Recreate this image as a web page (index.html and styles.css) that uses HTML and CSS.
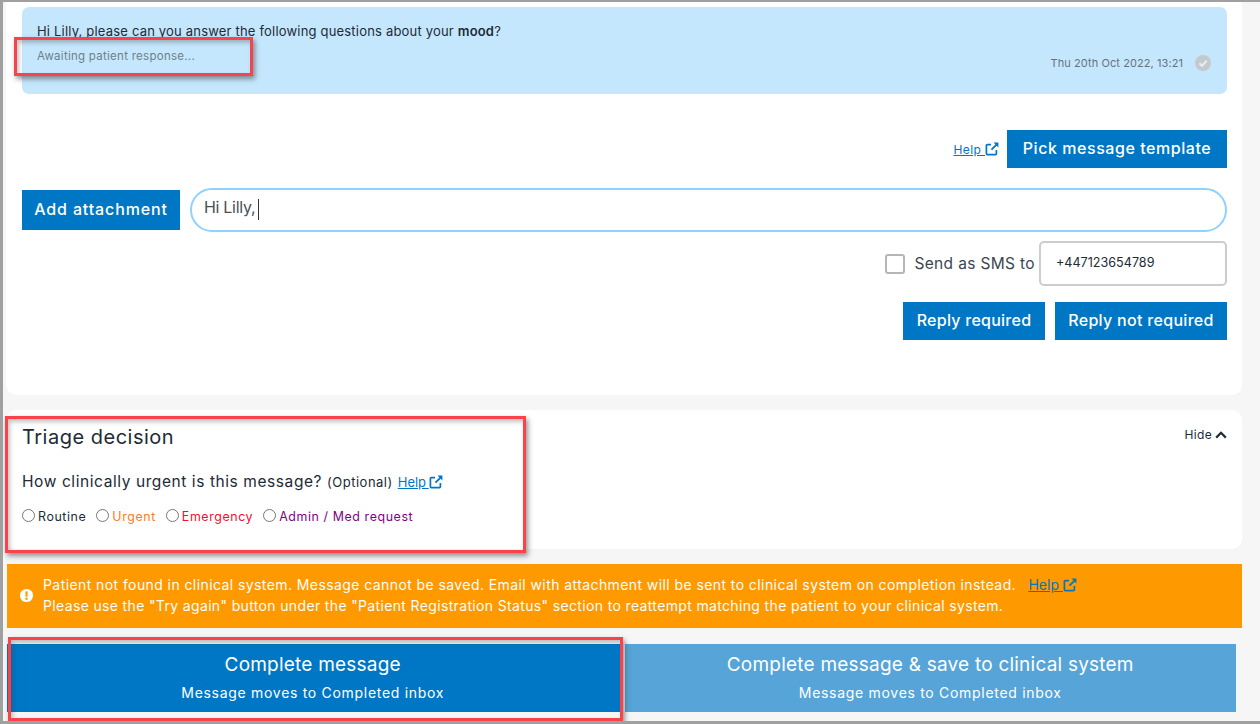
FILE: index.html
```html
<!DOCTYPE html>
<html lang="en">
<head>
<meta charset="utf-8">
<title>Triage message</title>
<link rel="stylesheet" href="styles.css">
</head>
<body>
<svg class="defs" width="0" height="0" aria-hidden="true">
  <symbol id="ext" viewBox="0 0 14 14">
    <path d="M6 2.6H2.4a1 1 0 0 0-1 1v8a1 1 0 0 0 1 1h8a1 1 0 0 0 1-1V8" fill="none" stroke="currentColor" stroke-width="1.7"/>
    <path d="M8.6.6h4.8v4.8l-1.7-1.7-4.6 4.6-1.3-1.3 4.6-4.6z" fill="currentColor"/>
  </symbol>
</svg>
<div class="frame">
  <section class="card card-reply">
    <div class="bubble">
      <p class="bubble-text">Hi Lilly, please can you answer the following questions about your <b>mood</b>?</p>
      <div class="bubble-foot">
        <span class="awaiting">Awaiting patient response...</span>
        <span class="stamp">Thu 20th Oct 2022, 13:21
          <svg class="tick" viewBox="0 0 16 16"><circle cx="8" cy="8" r="8" fill="#c4c9cd"/><path d="M4.4 8.3l2.5 2.5 4.8-5" fill="none" stroke="#e6eef3" stroke-width="2"/></svg>
        </span>
      </div>
    </div>
    <div class="row row-template">
      <a class="help" href="#">Help <svg class="ext"><use href="#ext"/></svg></a>
      <button class="btn btn-template">Pick message template</button>
    </div>
    <div class="row row-compose">
      <button class="btn btn-attach">Add attachment</button>
      <div class="compose"><span>Hi Lilly,</span><i class="caret"></i></div>
    </div>
    <div class="row row-sms">
      <span class="check"></span>
      <span class="sms-label">Send as SMS to</span>
      <div class="phone">+447123654789</div>
    </div>
    <div class="row row-send">
      <button class="btn btn-req">Reply required</button>
      <button class="btn btn-notreq">Reply not required</button>
    </div>
  </section>

  <section class="card card-triage">
    <div class="triage-head">
      <h2 class="triage-title">Triage decision</h2>
      <span class="hide">Hide
        <svg class="chev" viewBox="0 0 12 8"><path d="M1.2 6.6L6 1.8l4.8 4.8" fill="none" stroke="currentColor" stroke-width="2.2"/></svg>
      </span>
    </div>
    <p class="question">How clinically urgent is this message? <span class="optional">(Optional)</span> <a class="help help-q" href="#">Help <svg class="ext"><use href="#ext"/></svg></a></p>
    <div class="radios">
      <label class="radio"><i class="dot"></i>Routine</label>
      <label class="radio urgent"><i class="dot"></i>Urgent</label>
      <label class="radio emergency"><i class="dot"></i>Emergency</label>
      <label class="radio admin"><i class="dot"></i>Admin / Med request</label>
    </div>
  </section>

  <section class="alert">
    <svg class="alert-icon" viewBox="0 0 16 16"><circle cx="8" cy="8" r="7" fill="#fff"/><rect x="6.9" y="3.4" width="2.2" height="6" rx="1" fill="#ff9900"/><circle cx="8" cy="11.4" r="1.3" fill="#ff9900"/></svg>
    <div class="alert-text">
      <p class="alert-line-one">Patient not found in clinical system. Message cannot be saved. Email with attachment will be sent to clinical system on completion instead. <a class="help help-alert" href="#">Help <svg class="ext"><use href="#ext"/></svg></a></p>
      <p class="alert-line-two">Please use the "Try again" button under the "Patient Registration Status" section to reattempt matching the patient to your clinical system.</p>
    </div>
  </section>

  <div class="actions">
    <button class="action"><span class="action-title">Complete message</span><span class="action-sub">Message moves to Completed inbox</span></button>
    <button class="action action-muted"><span class="action-title">Complete message &amp; save to clinical system</span><span class="action-sub">Message moves to Completed inbox</span></button>
  </div>

  <i class="mark mark-await"></i>
  <i class="mark mark-triage"></i>
  <i class="mark mark-complete"></i>
</div>
</body>
</html>
```
FILE: styles.css
```css
* { box-sizing: border-box; }
html, body { margin: 0; height: 724px; overflow: hidden; }
body { font-family: Inter, "Noto Sans", sans-serif; color: #212b36; background: #f6f6f6; }
p, h2 { margin: 0; }
.defs { position: absolute; }
.frame { position: relative; width: 1260px; height: 724px; padding: 0 18px 0 3px; border-top: 2px solid #a0a0a0; border-left: 3px solid #a0a0a0; border-bottom: 3px solid #a0a0a0; overflow: hidden; }
.card { background: #fff; border-radius: 10px; padding: 0 15px 0 16px; }
.card-reply { height: 393px; border-radius: 0 0 10px 10px; padding-top: 5px; }
.bubble { height: 87px; background: #c5e7fd; border-radius: 7px; padding: 16px 16px 0 15px; }
.bubble-text { font-size: 13px; line-height: 17px; letter-spacing: .19px; }
.bubble-text b { font-weight: 600; }
.bubble-foot { display: flex; justify-content: space-between; align-items: flex-start; }
.awaiting { font-size: 11.5px; color: #6f7f8b; margin-top: 9px; line-height: 15px; letter-spacing: .27px; }
.stamp { display: flex; align-items: center; gap: 12px; font-size: 11px; color: #66737d; line-height: 16px; margin-top: 15px; letter-spacing: .08px; }
.tick { width: 16px; height: 16px; }
.row { display: flex; justify-content: flex-end; align-items: center; }
.btn { border: 0; background: #0077c5; color: #fff; font: 500 16px/20px Inter, sans-serif; padding: 0 0 2px; height: 38px; }
.row-template { margin-top: 36px; gap: 8px; }
.btn-template { width: 220px; letter-spacing: .55px; }
.help { color: #0077c5; font-size: 12px; text-decoration: underline; white-space: nowrap; letter-spacing: .4px; }
.ext { width: 14px; height: 14px; vertical-align: -2px; }
.row-compose { margin-top: 20px; justify-content: flex-start; gap: 10px; }
.btn-attach { width: 158px; height: 40px; letter-spacing: .87px; }
.compose { flex: 1; height: 44px; border: 2px solid #8ed2ff; border-radius: 22px; display: flex; align-items: center; padding: 0 0 6px 12px; font-size: 16px; color: #4a4f55; letter-spacing: -.3px; }
.caret { width: 1px; height: 21px; background: #333; margin-left: 3px; margin-top: 4px; }
.row-sms { margin-top: 9px; }
.check { width: 20px; height: 20px; border: 2px solid #b5b5b5; border-radius: 3px; margin-right: 9px; }
.sms-label { font-size: 15.5px; margin-right: 4px; letter-spacing: .35px; color: #3c4650; }
.phone { width: 188px; height: 45px; border: 2px solid #ccc; border-radius: 5px; padding: 0 15px 2px; display: flex; align-items: center; font-size: 12.6px; }
.row-send { margin-top: 16px; gap: 10px; }
.btn-req { width: 142px; letter-spacing: .25px; }
.btn-notreq { width: 172px; letter-spacing: .3px; }
.card-triage { height: 139px; margin-top: 15px; padding-top: 13px; }
.triage-head { display: flex; justify-content: space-between; align-items: flex-start; }
.triage-title { font-size: 20px; font-weight: 400; line-height: 28px; letter-spacing: .5px; }
.hide { display: flex; align-items: center; gap: 3px; font-size: 12px; margin-top: 4px; line-height: 16px; letter-spacing: .35px; }
.chev { width: 12px; height: 8px; }
.question { font-size: 15.5px; line-height: 22px; margin-top: 20px; letter-spacing: .58px; }
.optional { font-size: 13px; letter-spacing: .5px; }
.help-q { font-size: 13px; letter-spacing: 0; word-spacing: -1px; }
.radios { display: flex; margin-top: 15px; gap: 10px; }
.radio { display: flex; align-items: center; font-size: 12.4px; line-height: 17px; letter-spacing: .6px; }
.dot { width: 13px; height: 13px; border: 1px solid #767676; border-radius: 50%; margin-right: 3px; margin-top: -3px; }
.urgent { color: #ff7a1a; }
.emergency { color: #f00f2d; }
.admin { color: #800080; }
.alert { display: flex; align-items: center; height: 64px; margin: 15px 0 0 1px; background: #ff9900; color: #fff; padding: 0 12px 2px; gap: 9px; }
.alert-icon { width: 15px; height: 15px; flex: none; }
.alert-text { font-size: 14px; line-height: 21px; }
.alert-line-one { letter-spacing: .415px; }
.alert-line-two { letter-spacing: .35px; }
.help-alert { font-size: 14px; margin-left: 8px; letter-spacing: 0; }
.actions { display: flex; margin: 16px 6px 0 1px; gap: 3px; }
.action { flex: 1; height: 68px; border: 0; padding: 0; background: #0077c5; color: #fff; display: flex; flex-direction: column; align-items: center; font-family: Inter, sans-serif; }
.action:first-child { padding-right: 3px; }
.action-muted { background: #56a4d8; }
.action-title { font-size: 19px; line-height: 24px; margin-top: 9px; letter-spacing: .22px; }
.action-sub { font-size: 14px; line-height: 18px; margin-top: 7px; letter-spacing: .7px; }
.mark { position: absolute; border: 3px solid #f9424a; box-shadow: 2px 3px 5px rgba(60,60,60,.55), inset 2px 3px 4px rgba(60,60,60,.3); }
.mark-await { left: 11px; top: 35px; width: 239px; height: 39px; }
.mark-triage { left: 2px; top: 414px; width: 521px; height: 137px; }
.mark-complete { left: 5px; top: 635px; width: 615px; height: 84px; }
```
